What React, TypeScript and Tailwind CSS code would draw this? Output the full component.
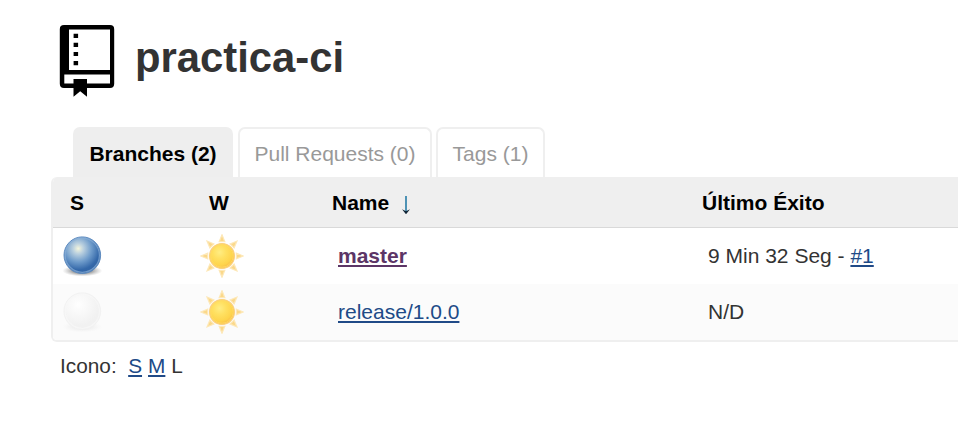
import React from "react";

function BookIcon() {
  return (
    <svg className="h-[77px] w-[60px] shrink-0" viewBox="57 22 60 77" aria-hidden="true">
      <path
        fillRule="evenodd"
        d="M64 25H110Q114.2 25 114.2 29.2V83.8Q114.2 88 110 88H87V96.8L80.2 91.2L73.5 96.8V88H64Q59.8 88 59.8 83.8V29.2Q59.8 25 64 25ZM69 29.5V70H110V29.5ZM64.3 74.5V83.5H73.5V79H87V83.5H110V74.5Z"
        fill="#000"
      />
      <path d="M73.6 33.7h4.5v4.2h-4.5zM73.6 42.7h4.5v4.2h-4.5zM73.6 51.9h4.5v4.2h-4.5zM73.6 61h4.5v4.2h-4.5z" />
    </svg>
  );
}

function Ball({ kind }: { kind: "blue" | "empty" }) {
  const blue = kind === "blue";
  const id = `ball-${kind}`;
  return (
    <svg className="block h-[44px] w-[44px]" viewBox="0 0 44 44" aria-hidden="true">
      <defs>
        <radialGradient id={id} cx="0.39" cy="0.32" r="0.66">
          <stop offset="0" stopColor={blue ? "#f4f5dc" : "#ffffff"} />
          <stop offset="0.22" stopColor={blue ? "#bad0df" : "#fbfbfb"} />
          <stop offset="0.55" stopColor={blue ? "#6f9ccb" : "#f6f6f6"} />
          <stop offset="0.88" stopColor={blue ? "#3468a9" : "#f1f1f1"} />
          <stop offset="1" stopColor={blue ? "#3265a5" : "#f1f1f1"} />
        </radialGradient>
        <radialGradient id={`${id}-shade`}>
          <stop offset="0.5" stopColor={blue ? "#888" : "#eee"} stopOpacity="0.75" />
          <stop offset="1" stopColor={blue ? "#aaa" : "#f3f3f3"} stopOpacity="0" />
        </radialGradient>
      </defs>
      <ellipse cx="22.3" cy="36.8" rx="20" ry="5.6" fill={`url(#${id}-shade)`} />
      <circle cx="22.3" cy="21.2" r="18.3" fill={`url(#${id})`} stroke={blue ? "#5f8cc0" : "#f2f2f2"} strokeWidth="1" />
      <circle cx="22.3" cy="21.2" r="17.1" fill="none" stroke={blue ? "#8aafd7" : "#f8f8f8"} strokeOpacity="0.7" strokeWidth="1.2" />
    </svg>
  );
}

function Sun({ id }: { id: string }) {
  return (
    <svg className="ml-px block h-[44px] w-[44px]" viewBox="0 0 44 44" aria-hidden="true">
      <defs>
        <radialGradient id={id} cx="0.4" cy="0.35" r="0.65">
          <stop offset="0" stopColor="#ffed83" />
          <stop offset="0.4" stopColor="#ffe061" />
          <stop offset="0.8" stopColor="#fed44c" />
          <stop offset="1" stopColor="#f9bd49" />
        </radialGradient>
      </defs>
      {[0, 45, 90, 135, 180, 225, 270, 315].map((angle) => (
        <path
          key={angle}
          d="M22 0.8L24.8 7.7H19.2Z"
          transform={`rotate(${angle} 22 22)`}
          fill="#fbd889"
          stroke="#fde8b8"
          strokeWidth="1.2"
        />
      ))}
      <circle cx="22" cy="22" r="12.4" fill={`url(#${id})`} stroke="#fbd07c" strokeWidth="1.2" />
      <circle cx="22" cy="22" r="11.2" fill="none" stroke="#ffdc62" strokeWidth="0.8" />
    </svg>
  );
}

const link = "text-[#204a87] underline decoration-2 underline-offset-2 [text-decoration-skip-ink:none]";
const columns = "grid grid-cols-[139px_122px_370px_1fr]";
const inactiveTab = "h-[50px] rounded-t-[7px] border-2 border-b-0 border-[#efefef] text-center leading-[49px] text-[#999]";

export default function App() {
  return (
    <main className="h-[432px] w-[958px] overflow-hidden bg-white font-['Liberation_Sans',Arial,sans-serif] text-[21px] leading-6 text-[#333]">
      <header className="flex h-[127px] pl-[57px] pt-[22px]">
        <BookIcon />
        <h1 className="ml-[18px] mt-3 text-[41.8px] font-bold leading-[48px]">practica-ci</h1>
      </header>

      <nav className="flex pl-[73px]">
        <a className="mr-[5px] h-[50px] w-[160px] rounded-t-[7px] bg-[#eee] pt-[2px] text-center font-bold leading-[49px] text-black">Branches (2)</a>
        <a className={`${inactiveTab} mr-1 w-[194px]`}>Pull Requests (0)</a>
        <a className={`${inactiveTab} w-[109px]`}>Tags (1)</a>
      </nav>

      <section className="ml-[51px] h-[165px] overflow-hidden rounded-l-[6px] border-b-2 border-l-2 border-[#efefef]">
        <div className={`${columns} h-[51px] border-b border-[#d9d9d9] bg-[#efefef] pl-[17px] pt-[14px] font-bold text-black`}>
          <span>S</span>
          <span>W</span>
          <span className="flex pl-px">
            Name
            <svg className="ml-[11px] mt-[5px] h-5 w-3 shrink-0" viewBox="0 0 12 20" fill="none" aria-hidden="true">
              <path d="M6 0V17" stroke="#0a6c9c" strokeWidth="1.4" />
              <path d="M2 13.2L6 15.2L10 13.2L6 18.2Z" fill="#102536" />
            </svg>
          </span>
          <span className="pl-px">Último Éxito</span>
        </div>
        <div className={`${columns} h-14 items-center pl-[7px]`}>
          <Ball kind="blue" />
          <Sun id="sun-master" />
          <span className="pl-[17px]"><a className="font-bold text-[#5c3566] underline decoration-2 underline-offset-2">master</a></span>
          <span className="pl-[17px]">9 Min 32 Seg - <a className={link}>#1</a></span>
        </div>
        <div className={`${columns} h-14 items-center bg-[#fbfbfb] pl-[7px]`}>
          <Ball kind="empty" />
          <Sun id="sun-release" />
          <span className="pl-[17px]"><a className={link}>release/1.0.0</a></span>
          <span className="pl-[17px]">N/D</span>
        </div>
      </section>

      <footer className="flex pl-[60px] pt-3 text-[20.8px]">
        <span className="mr-[11.5px]">Icono:</span>
        <a className={`${link} mr-[6px]`}>S</a>
        <a className={`${link} mr-[6px]`}>M</a>
        <span>L</span>
      </footer>
    </main>
  );
}
